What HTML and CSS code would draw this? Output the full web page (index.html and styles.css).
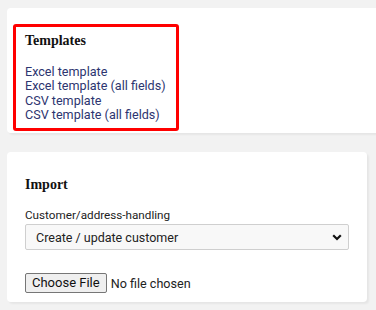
FILE: index.html
```html
<!DOCTYPE html>
<html>
<head>
<meta charset="utf-8">
<link rel="stylesheet" href="styles.css">
</head>
<body>
<div class="card card-top">
  <div class="highlight">
    <h3 class="heading">Templates</h3>
    <div class="links">
      <a class="link" href="#">Excel template</a>
      <a class="link" href="#">Excel template (all fields)</a>
      <a class="link" href="#">CSV template</a>
      <a class="link" href="#">CSV template (all fields)</a>
    </div>
  </div>
</div>
<div class="card card-import">
  <h3 class="heading">Import</h3>
  <label class="label" for="handling">Customer/address-handling</label>
  <div class="select-wrap">
    <select id="handling" class="select">
      <option>Create / update customer</option>
    </select>
    <svg class="chevron" width="10" height="7" viewBox="0 0 10 7"><path d="M1.2 1.2 L5 5 L8.8 1.2" fill="none" stroke="#111" stroke-width="2.2"/></svg>
  </div>
  <div class="file-row">
    <input type="file" class="file">
  </div>
</div>
</body>
</html>
```
FILE: styles.css
```css
html, body {
  margin: 0;
  padding: 0;
  background: #f2f2f2;
  overflow: hidden;
}
body {
  width: 376px;
  height: 310px;
  font-family: Roboto, "Liberation Sans", sans-serif;
  color: #222;
}
.card {
  background: #fff;
  border-radius: 4px;
  box-shadow: 2px 2px 2px rgba(0,0,0,0.05);
  box-sizing: border-box;
}
.card-top {
  margin: 8px 0 0 7px;
  width: 369px;
  height: 125px;
  padding: 16px 0 0 6px;
  border-radius: 4px 0 0 4px;
}
.highlight {
  width: 166px;
  height: 107px;
  box-sizing: border-box;
  border: 3px solid #ff0000;
  border-radius: 3px;
  padding: 6px 0 0 9px;
}
.heading {
  margin: 0;
  font-family: "Liberation Serif", "DejaVu Serif", serif;
  font-weight: bold;
  font-size: 14px;
  line-height: 16px;
  color: #111;
}
.links {
  margin-top: 15.5px;
  display: flex;
  flex-direction: column;
}
.link {
  font-size: 12.6px;
  line-height: 14.6px;
  color: #2d3570;
  text-decoration: none;
}
.card-import {
  margin: 19px 9px 0 7px;
  height: 150px;
  padding: 25px 18px 0 18px;
}
.label {
  display: block;
  margin-top: 15px;
  font-size: 11.7px;
  line-height: 14px;
  color: #222;
}
.select-wrap {
  position: relative;
  margin-top: 2px;
  width: 324px;
}
.select {
  appearance: none;
  -webkit-appearance: none;
  display: block;
  width: 324px;
  height: 26px;
  box-sizing: border-box;
  border: 1px solid #cfcfcf;
  border-radius: 2px;
  background: #f8f8f8;
  padding: 0 10px;
  font-family: Roboto, "Liberation Sans", sans-serif;
  font-size: 12.5px;
  color: #222;
  outline: none;
}
.chevron {
  position: absolute;
  right: 7px;
  top: 10px;
  pointer-events: none;
}
.file-row {
  margin-top: 22px;
}
.file {
  font-family: Roboto, "Liberation Sans", sans-serif;
  font-size: 12.6px;
  color: #222;
}
.file::file-selector-button {
  font-family: Roboto, "Liberation Sans", sans-serif;
  font-size: 13px;
  height: 20px;
  padding: 0 6px;
  margin-right: 4px;
  border: 1px solid #767676;
  border-radius: 2px;
  background: #efefef;
  color: #111;
}
```
